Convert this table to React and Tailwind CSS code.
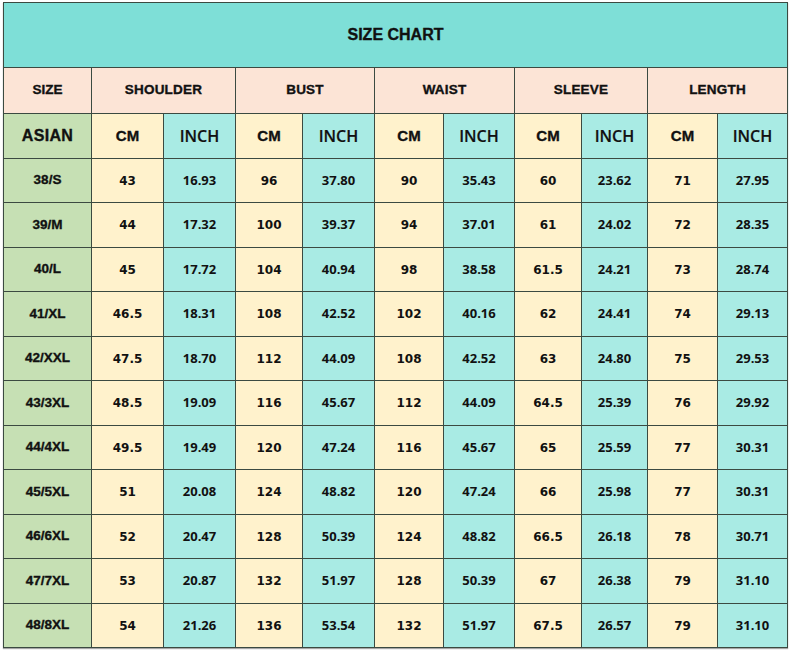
import React from "react";

const rows = [
  ["38/S", "43", "16.93", "96", "37.80", "90", "35.43", "60", "23.62", "71", "27.95"],
  ["39/M", "44", "17.32", "100", "39.37", "94", "37.01", "61", "24.02", "72", "28.35"],
  ["40/L", "45", "17.72", "104", "40.94", "98", "38.58", "61.5", "24.21", "73", "28.74"],
  ["41/XL", "46.5", "18.31", "108", "42.52", "102", "40.16", "62", "24.41", "74", "29.13"],
  ["42/XXL", "47.5", "18.70", "112", "44.09", "108", "42.52", "63", "24.80", "75", "29.53"],
  ["43/3XL", "48.5", "19.09", "116", "45.67", "112", "44.09", "64.5", "25.39", "76", "29.92"],
  ["44/4XL", "49.5", "19.49", "120", "47.24", "116", "45.67", "65", "25.59", "77", "30.31"],
  ["45/5XL", "51", "20.08", "124", "48.82", "120", "47.24", "66", "25.98", "77", "30.31"],
  ["46/6XL", "52", "20.47", "128", "50.39", "124", "48.82", "66.5", "26.18", "78", "30.71"],
  ["47/7XL", "53", "20.87", "132", "51.97", "128", "50.39", "67", "26.38", "79", "31.10"],
  ["48/8XL", "54", "21.26", "136", "53.54", "132", "51.97", "67.5", "26.57", "79", "31.10"],
];

const groups = ["SHOULDER", "BUST", "WAIST", "SLEEVE", "LENGTH"];

const arial = "font-['Liberation_Sans',Arial,sans-serif] font-bold [-webkit-text-stroke:0.35px_#111]";
const dejavu = "font-['DejaVu_Sans',Verdana,sans-serif] font-bold";
const opensans = "font-['Open_Sans',sans-serif]";

export default function App() {
  return (
    <div className="w-[790px] h-[652px] bg-white pl-[3px] pt-[2px]">
      <div className="grid w-fit gap-px p-px bg-[#3b4a41] text-[#111] grid-cols-[87px_71px_71px_66px_71px_68px_70px_66px_65px_69px_69px] grid-rows-[64px_45px_44px_43px_44px_43px_44px_43px_44px_43px_44px_43px_44px_43px] shadow-[0_1px_1px_rgba(0,0,0,0.35)]">
        <div className={`col-span-full bg-[#7edfd7] flex items-center justify-center ${arial} text-[16px]`}>
          SIZE CHART
        </div>

        <div className={`bg-[#fce4d6] flex items-center justify-center ${arial} text-[13.5px]`}>
          SIZE
        </div>
        {groups.map((g) => (
          <div
            key={g}
            className={`col-span-2 bg-[#fce4d6] flex items-center justify-center ${arial} text-[13.5px] tracking-[0.2px]`}
          >
            {g}
          </div>
        ))}

        <div className={`bg-[#c6e0b4] flex items-center justify-center ${arial} text-[16px] tracking-[0.3px]`}>
          ASIAN
        </div>
        {groups.map((g) => (
          <React.Fragment key={g + "-sub"}>
            <div className={`bg-[#fff2cc] flex items-center justify-center ${arial} text-[15px]`}>
              CM
            </div>
            <div className={`bg-[#a9ebe4] flex items-center justify-center ${opensans} font-semibold text-[16px] [-webkit-text-stroke:0.2px_#111]`}>
              INCH
            </div>
          </React.Fragment>
        ))}

        {rows.map((r) => (
          <React.Fragment key={r[0]}>
            <div className={`bg-[#c6e0b4] flex items-center justify-center ${arial} text-[13.5px]`}>
              {r[0]}
            </div>
            {r.slice(1).map((v, i) =>
              i % 2 === 0 ? (
                <div
                  key={i}
                  className={`bg-[#fff2cc] flex items-center justify-center ${dejavu} text-[12px]`}
                >
                  {v}
                </div>
              ) : (
                <div
                  key={i}
                  className={`bg-[#a9ebe4] flex items-center justify-center ${opensans} font-bold text-[13px]`}
                >
                  {v}
                </div>
              )
            )}
          </React.Fragment>
        ))}
      </div>
    </div>
  );
}
